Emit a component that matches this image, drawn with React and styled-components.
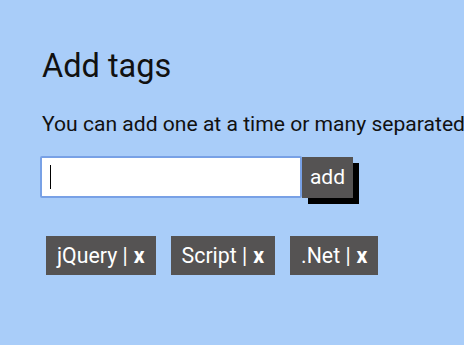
import React, { useState } from 'react';
import styled, { createGlobalStyle } from 'styled-components';

const GlobalStyle = createGlobalStyle`
  html, body {
    margin: 0;
    padding: 0;
    background: #a9cdf9;
    overflow: hidden;
  }
  body {
    font-family: Roboto, "Liberation Sans", sans-serif;
    color: #111;
  }
`;

const Page = styled.div`
  padding: 47px 0 0 42px;
  min-height: 345px;
  box-sizing: border-box;
`;

const Title = styled.h1`
  margin: 0;
  font-size: 32.5px;
  line-height: 38px;
  font-weight: 400;
`;

const Hint = styled.p`
  margin: 27px 0 0;
  font-size: 21.1px;
  line-height: 24px;
  white-space: nowrap;
`;

const Form = styled.form`
  display: flex;
  margin: 20px 0 0 -2px;
`;

const Field = styled.div`
  position: relative;
`;

const TagInput = styled.input`
  width: 262px;
  height: 42px;
  box-sizing: border-box;
  border: 2px solid #78a1e6;
  border-radius: 2px;
  padding: 0 9px;
  font-family: inherit;
  font-size: 22px;
  background: #fff;
  caret-color: #000;
  outline: none;
  display: block;
`;

const Caret = styled.span`
  position: absolute;
  left: 10px;
  top: 9px;
  width: 1px;
  height: 24px;
  background: #000;
  pointer-events: none;
`;

const AddButton = styled.button`
  width: 51px;
  height: 41px;
  margin-top: 1px;
  border: none;
  background: #555353;
  color: #fff;
  font-family: inherit;
  font-size: 21px;
  padding: 0 0 2px;
  box-shadow: 6px 6px 0 #000;
  cursor: pointer;
`;

const TagList = styled.ul`
  list-style: none;
  display: flex;
  gap: 15px;
  margin: 38px 0 0 4px;
  padding: 0;
`;

const Tag = styled.li`
  height: 39px;
  padding: 0 11px;
  display: flex;
  align-items: center;
  background: #555353;
  color: #fff;
  font-size: 21.3px;
`;

const Remove = styled.b`
  font-weight: 700;
  margin-left: 6px;
  cursor: pointer;
`;

export default function App() {
  const [tags, setTags] = useState(['jQuery', 'Script', '.Net']);
  const [value, setValue] = useState('');

  const addTags = (e) => {
    e.preventDefault();
    const next = value.split(',').map((t) => t.trim()).filter(Boolean);
    if (next.length) setTags([...tags, ...next]);
    setValue('');
  };

  return (
    <Page>
      <GlobalStyle />
      <Title>Add tags</Title>
      <Hint>You can add one at a time or many separated</Hint>
      <Form onSubmit={addTags}>
        <Field>
          <TagInput value={value} onChange={(e) => setValue(e.target.value)} />
          {!value && <Caret />}
        </Field>
        <AddButton type="submit">add</AddButton>
      </Form>
      <TagList>
        {tags.map((tag, i) => (
          <Tag key={tag + i}>
            {tag} |<Remove onClick={() => setTags(tags.filter((_, j) => j !== i))}>x</Remove>
          </Tag>
        ))}
      </TagList>
    </Page>
  );
}
